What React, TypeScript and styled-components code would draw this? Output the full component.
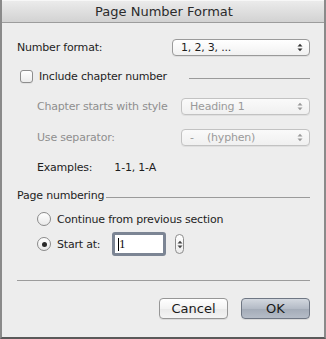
import React from "react";
import styled, { createGlobalStyle } from "styled-components";

const Global = createGlobalStyle`
  html, body { margin: 0; padding: 0; background: #ececec; }
  body { font-family: "DejaVu Sans", "Liberation Sans", sans-serif; font-size: 11px; letter-spacing: -0.2px; color: #1e1e1e; }
  * { box-sizing: border-box; }
`;

const Window = styled.div`
  width: 326px;
  height: 339px;
  background: #ededed;
  border-left: 2px solid #8a8a8a;
  border-right: 2px solid #8a8a8a;
  border-bottom: 2px solid #5a5a5a;
  display: flex;
  flex-direction: column;
`;

const TitleBar = styled.div`
  height: 23px;
  flex: none;
  background: linear-gradient(#ebebeb, #d2d2d2);
  border-top: 1px solid #f7f7f7;
  border-bottom: 1px solid #9c9c9c;
  display: flex;
  align-items: center;
  justify-content: center;
  font-size: 13px;
  letter-spacing: 0;
  color: #2b2b2b;
  padding-left: 2px;
`;

const Body = styled.div`
  flex: 1;
  display: flex;
  flex-direction: column;
  padding: 15px 14px 0 15px;
`;

const Row = styled.div<{ $mt: number; $h?: number; $indent?: number }>`
  display: flex;
  align-items: center;
  height: ${(p) => p.$h ?? 18}px;
  margin-top: ${(p) => p.$mt}px;
  padding-left: ${(p) => p.$indent ?? 0}px;
`;

const Label = styled.span<{ $disabled?: boolean }>`
  flex: none;
  color: ${(p) => (p.$disabled ? "#8f8f8f" : "#1e1e1e")};
  white-space: nowrap;
`;

const ExampleValue = styled.span`
  margin-left: 22px;
  white-space: nowrap;
`;

const Popup = styled.div<{ $disabled?: boolean; $w: number }>`
  margin-left: auto;
  width: ${(p) => p.$w}px;
  height: 17px;
  border: 1px solid ${(p) => (p.$disabled ? "#c2c2c2" : "#9a9a9a")};
  border-radius: 4px;
  background: ${(p) => (p.$disabled ? "linear-gradient(#fafafa, #f0f0f0)" : "linear-gradient(#ffffff, #f1f1f1)")};
  box-shadow: 0 1px 0 rgba(0,0,0,0.06);
  display: flex;
  align-items: center;
  padding: 0 6px 0 8px;
  color: ${(p) => (p.$disabled ? "#9a9a9a" : "#1e1e1e")};
`;

const PopupText = styled.span`
  flex: 1;
  white-space: pre;
`;

const Arrows = ({ color }: { color: string }) => (
  <svg width="6" height="9" viewBox="0 0 6 9">
    <path d="M0.5 3.5 L3 0.8 L5.5 3.5 Z" fill={color} />
    <path d="M0.5 5.5 L3 8.2 L5.5 5.5 Z" fill={color} />
  </svg>
);

const Check = styled.span`
  width: 13px;
  height: 13px;
  border: 1px solid #8d8d8d;
  border-radius: 3px;
  background: linear-gradient(#ffffff, #ececec);
  box-shadow: 0 1px 0 rgba(0,0,0,0.05);
  margin-left: 3px;
  margin-right: 6px;
  flex: none;
`;

const Rule = styled.div<{ $ml: number }>`
  flex: 1;
  margin-left: ${(p) => p.$ml}px;
  height: 1px;
  background: #9a9a9a;
  margin-top: 4px;
`;

const Radio = styled.span<{ $on?: boolean }>`
  width: 14px;
  height: 14px;
  border-radius: 50%;
  border: 1px solid #8a8a8a;
  background: linear-gradient(#ffffff, #e9e9e9);
  flex: none;
  margin-right: 6px;
  display: flex;
  align-items: center;
  justify-content: center;
  &::after {
    content: "";
    display: ${(p) => (p.$on ? "block" : "none")};
    width: 5px;
    height: 5px;
    border-radius: 50%;
    background: #2a2a2a;
  }
`;

const Field = styled.div`
  margin-left: 12px;
  width: 54px;
  height: 24px;
  border: 3px solid #7c8594;
  border-radius: 3px;
  background: #fff;
  display: flex;
  align-items: center;
  padding-left: 3px;
  font-family: "Liberation Serif", serif;
  font-size: 12px;
  letter-spacing: 0;
  color: #000;
`;

const Caret = styled.span`
  width: 1px;
  height: 13px;
  background: #000;
`;

const Stepper = styled.div`
  margin-left: 9px;
  width: 9px;
  height: 20px;
  border: 1px solid #8d8d8d;
  border-radius: 5px;
  background: linear-gradient(#ffffff, #ececec);
  display: flex;
  align-items: center;
  justify-content: center;
`;

const Separator = styled.div`
  height: 1px;
  background: #9c9c9c;
  margin-top: 24px;
`;

const ButtonRow = styled.div`
  display: flex;
  justify-content: flex-end;
  gap: 13px;
  margin-top: 17px;
`;

const Button = styled.button<{ $default?: boolean }>`
  width: 69px;
  height: 21px;
  border-radius: 4px;
  font-family: inherit;
  font-size: 13px;
  letter-spacing: 0;
  padding: 0;
  color: #1a1a1a;
  border: 1px solid ${(p) => (p.$default ? "#6f7784" : "#969696")};
  background: ${(p) =>
    p.$default
      ? "linear-gradient(#d3d8df, #b4bbc6 50%, #a3abb7 51%, #b5bcc7)"
      : "linear-gradient(#ffffff, #f3f3f3 50%, #e9e9e9 51%, #f4f4f4)"};
  box-shadow: 0 1px 0 rgba(0,0,0,0.08);
`;

export default function App() {
  return (
    <>
      <Global />
      <Window>
        <TitleBar>Page Number Format</TitleBar>
        <Body>
          <Row $mt={0}>
            <Label>Number format:</Label>
            <Popup $w={138}>
              <PopupText>1, 2, 3, ...</PopupText>
              <Arrows color="#333" />
            </Popup>
          </Row>
          <Row $mt={11}>
            <Check />
            <Label>Include chapter number</Label>
            <Rule $ml={22} />
          </Row>
          <Row $mt={12} $indent={20}>
            <Label $disabled>Chapter starts with style</Label>
            <Popup $w={129} $disabled>
              <PopupText>Heading 1</PopupText>
              <Arrows color="#999" />
            </Popup>
          </Row>
          <Row $mt={13} $indent={20}>
            <Label $disabled>Use separator:</Label>
            <Popup $w={129} $disabled>
              <PopupText>{"-    (hyphen)"}</PopupText>
              <Arrows color="#999" />
            </Popup>
          </Row>
          <Row $mt={12} $indent={20}>
            <Label>Examples:</Label>
            <ExampleValue>1-1, 1-A</ExampleValue>
          </Row>
          <Row $mt={10}>
            <Label>Page numbering</Label>
            <Rule $ml={2} />
          </Row>
          <Row $mt={6} $indent={20}>
            <Radio />
            <Label>Continue from previous section</Label>
          </Row>
          <Row $mt={4} $h={24} $indent={20}>
            <Radio $on />
            <Label>Start at:</Label>
            <Field>
              <Caret />
              1
            </Field>
            <Stepper>
              <Arrows color="#444" />
            </Stepper>
          </Row>
          <Separator />
          <ButtonRow>
            <Button>Cancel</Button>
            <Button $default>OK</Button>
          </ButtonRow>
        </Body>
      </Window>
    </>
  );
}
